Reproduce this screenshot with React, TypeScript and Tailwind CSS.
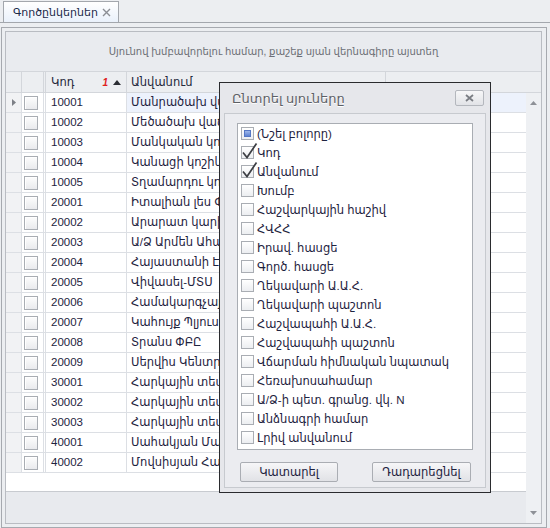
import { useState } from 'react';

const ROWS: [string, string][] = [
  ['10001', 'Մանրածախ վաճառք'],
  ['10002', 'Մեծածախ վաճառք'],
  ['10003', 'Մանկական կոշիկներ'],
  ['10004', 'Կանացի կոշիկներ'],
  ['10005', 'Տղամարդու կոշիկներ'],
  ['20001', 'Իտալիան լես ՓԲԸ'],
  ['20002', 'Արարատ կարի-արտադրական'],
  ['20003', 'Ա/Ձ Արմեն Ահարոնյան'],
  ['20004', 'Հայաստանի Էլեկտրական ցանցեր'],
  ['20005', 'Վիվասել-ՄՏՍ'],
  ['20006', 'Համակարգչային կենտրոն'],
  ['20007', 'Կահույք Պլյուս'],
  ['20008', 'Տրանս ՓԲԸ'],
  ['20009', 'Սերվիս Կենտրոն'],
  ['30001', 'Հարկային տեսչություն'],
  ['30002', 'Հարկային տեսչություն'],
  ['30003', 'Հարկային տեսչություն'],
  ['40001', 'Սահակյան Մարատ'],
  ['40002', 'Մովսիսյան Հարություն'],
];

const COLUMNS = [
  'Կոդ',
  'Անվանում',
  'Խումբ',
  'Հաշվարկային հաշիվ',
  'ՀՎՀՀ',
  'Իրավ. հասցե',
  'Գործ. հասցե',
  'Ղեկավարի Ա.Ա.Հ.',
  'Ղեկավարի պաշտոն',
  'Հաշվապահի Ա.Ա.Հ.',
  'Հաշվապահի պաշտոն',
  'Վճարման հիմնական նպատակ',
  'Հեռախոսահամար',
  'Ա/Ձ-ի պետ. գրանց. վկ. N',
  'Անձնագրի համար',
  'Լրիվ անվանում',
];

function GridCheck() {
  return (
    <span className="block w-[14px] h-[14px] border border-[#a9adb3] bg-gradient-to-b from-[#fdfdfd] to-[#e9eaed] shadow-[inset_1px_1px_0_#fff]" />
  );
}

function ListCheck({ state }: { state: 'on' | 'off' | 'mixed' }) {
  return (
    <span className="relative block w-[13px] h-[13px] shrink-0 border border-[#a9adb3] bg-gradient-to-b from-white to-[#eceef1]">
      {state === 'mixed' && (
        <span className="absolute inset-[2px] bg-gradient-to-b from-[#9fb7ea] to-[#5f83d2] border border-[#5577c4]" />
      )}
      {state === 'on' && (
        <svg className="absolute left-[-1px] top-[-5px]" width="17" height="18" viewBox="0 0 17 18">
          <path d="M2 10.5 L6 15.5 L15.5 1.5" fill="none" stroke="#3d3f44" strokeWidth="1.7" />
        </svg>
      )}
    </span>
  );
}

export default function App() {
  const [checked] = useState<Record<string, boolean>>({ 'Կոդ': true, 'Անվանում': true });

  return (
    <div className="relative w-[550px] h-[528px] overflow-hidden bg-[#eceef1] font-['Liberation_Sans','DejaVu_Sans',sans-serif] text-[11px] leading-[15px] text-[#1e2340] select-none">
      {/* tab strip */}
      <div className="h-[22px] flex items-end pl-[3px]">
        <div className="h-[21px] w-[116px] flex items-center border border-b-0 border-[#a3a7ad] bg-gradient-to-b from-white to-[#eaf1fb] pl-[9px] pr-[7px]">
          <span className="text-[11px] text-[#1b2a4a]">Գործընկերներ</span>
          <svg className="ml-auto" width="9" height="9" viewBox="0 0 9 9">
            <path d="M1 1 L8 8 M8 1 L1 8" stroke="#8b8e94" strokeWidth="1.4" />
          </svg>
        </div>
      </div>
      <div className="h-px bg-[#a3a7ad]" />

      {/* panel */}
      <div className="pt-[4px] pl-[1px] pr-[3px]">
        <div className="h-[501px] border border-[#a6a9af] pt-[3px] pl-[3px] pr-[4px] pb-[3px]">
          <div className="h-full flex flex-col border border-[#b9bcc2] bg-white">
            {/* group panel */}
            <div className="h-[40px] shrink-0 flex items-center justify-center bg-[#e9ebef] border-b border-[#d3d6db] text-[#6b6e75] text-[10px]">
              Սյունով խմբավորելու համար, քաշեք սյան վերնագիրը այստեղ
            </div>
            {/* header */}
            <div className="h-[21px] shrink-0 flex bg-[#eceef1] border-b border-[#d3d6db] text-[11.5px] text-[#25293c]">
              <div className="w-[16px] border-r border-[#d3d6db]" />
              <div className="w-[24px] border-r-[3px] border-double border-[#d3d6db]" />
              <div className="w-[81px] border-r border-[#d3d6db] flex items-center pl-[5px] pr-[5px]">
                <span>Կոդ</span>
                <span className="ml-auto text-[10px] font-bold italic text-[#e0211d] pr-[5px]">1</span>
                <svg width="8" height="5" viewBox="0 0 8 5">
                  <path d="M0 5 L4 0 L8 5 Z" fill="#2b2d33" />
                </svg>
              </div>
              <div className="w-[259px] border-r border-[#d3d6db] flex items-center pl-[4px]">Անվանում</div>
              <div className="flex-1" />
            </div>
            {/* body */}
            <div className="flex-1 flex min-h-0">
              <div className="flex-1 flex flex-col min-w-0">
                {ROWS.map(([code, name], i) => (
                  <div key={code} className="h-[20px] shrink-0 flex border-b border-[#dcdfe4]">
                    <div className="w-[16px] border-r border-[#dcdfe4] bg-[#f1f2f4] flex items-center justify-center">
                      {i === 0 && (
                        <svg width="4" height="7" viewBox="0 0 4 7">
                          <path d="M0 0 L4 3.5 L0 7 Z" fill="#7d8087" />
                        </svg>
                      )}
                    </div>
                    <div className="w-[24px] border-r-[3px] border-double border-[#dcdfe4] flex items-center pl-[2px]">
                      <GridCheck />
                    </div>
                    <div className="w-[81px] border-r border-[#dcdfe4] flex items-center pl-[5px] text-[11.5px]">{code}</div>
                    <div className={`w-[259px] border-r border-[#dcdfe4] flex items-center pl-[4px] whitespace-nowrap overflow-hidden text-[11.5px] ${i === 0 ? 'bg-[#edf2fc]' : ''}`}>
                      {name}
                    </div>
                    <div className={`flex-1 ${i === 0 ? 'bg-[#edf2fc]' : ''}`} />
                  </div>
                ))}
                <div className="h-[18px] shrink-0" />
                <div className="flex-1 bg-[#e8eaee] border-t border-[#c8cbd0]" />
              </div>
              {/* vertical scrollbar */}
              <div className="w-[15px] bg-[#eef0f3] flex flex-col items-center justify-between py-[8px]">
                <svg width="7" height="4" viewBox="0 0 7 4">
                  <path d="M0 4 L3.5 0 L7 4 Z" fill="#8e9197" />
                </svg>
                <svg width="7" height="4" viewBox="0 0 7 4">
                  <path d="M0 0 L3.5 4 L7 0 Z" fill="#8e9197" />
                </svg>
              </div>
            </div>
          </div>
        </div>
      </div>

      {/* column chooser dialog */}
      <div className="absolute left-[219px] top-[82px] w-[272px] h-[411px] border border-[#2a2b2e] bg-[#e6e7eb] flex flex-col">
        <div className="h-[30px] shrink-0 flex items-center pl-[12px] pr-[6px]">
          <span className="text-[13px] leading-[17px] text-[#5d6066] [text-shadow:0_1px_0_#fff]">Ընտրել սյուները</span>
          <button className="ml-auto w-[29px] h-[16px] flex items-center justify-center rounded-[2px] border border-[#b4b7bd] bg-gradient-to-b from-[#f7f7f8] to-[#e2e3e7]">
            <svg width="9" height="8" viewBox="0 0 9 8">
              <path d="M1 1 L8 7 M8 1 L1 7" stroke="#7a7d83" strokeWidth="1.8" />
            </svg>
          </button>
        </div>
        <div className="flex-1 mx-[4px] mb-[4px] border border-[#c7cacf] bg-[#ebecf0] flex flex-col px-[12px] pt-[9px]">
          <div className="h-[327px] border border-[#a9adb3] bg-white pl-[3px]">
            <div className="h-[19px] flex items-center gap-[3px]">
              <ListCheck state="mixed" />
              <span className="text-[11.5px] leading-[14px]">(Նշել բոլորը)</span>
            </div>
            {COLUMNS.map(c => (
              <div key={c} className="h-[19px] flex items-center gap-[3px]">
                <ListCheck state={checked[c] ? 'on' : 'off'} />
                <span className="text-[11.5px] leading-[14px] whitespace-nowrap">{c}</span>
              </div>
            ))}
          </div>
          <div className="flex justify-between pt-[12px] pl-[3px] pr-[2px]">
            <button className="w-[98px] h-[20px] rounded-[2px] border border-[#aaadb3] bg-gradient-to-b from-[#f6f6f8] to-[#e1e2e6] text-[11.5px] text-[#1e2340]">
              Կատարել
            </button>
            <button className="w-[99px] h-[20px] rounded-[2px] border border-[#aaadb3] bg-gradient-to-b from-[#f6f6f8] to-[#e1e2e6] text-[11.5px] text-[#1e2340]">
              Դադարեցնել
            </button>
          </div>
        </div>
      </div>
    </div>
  );
}
